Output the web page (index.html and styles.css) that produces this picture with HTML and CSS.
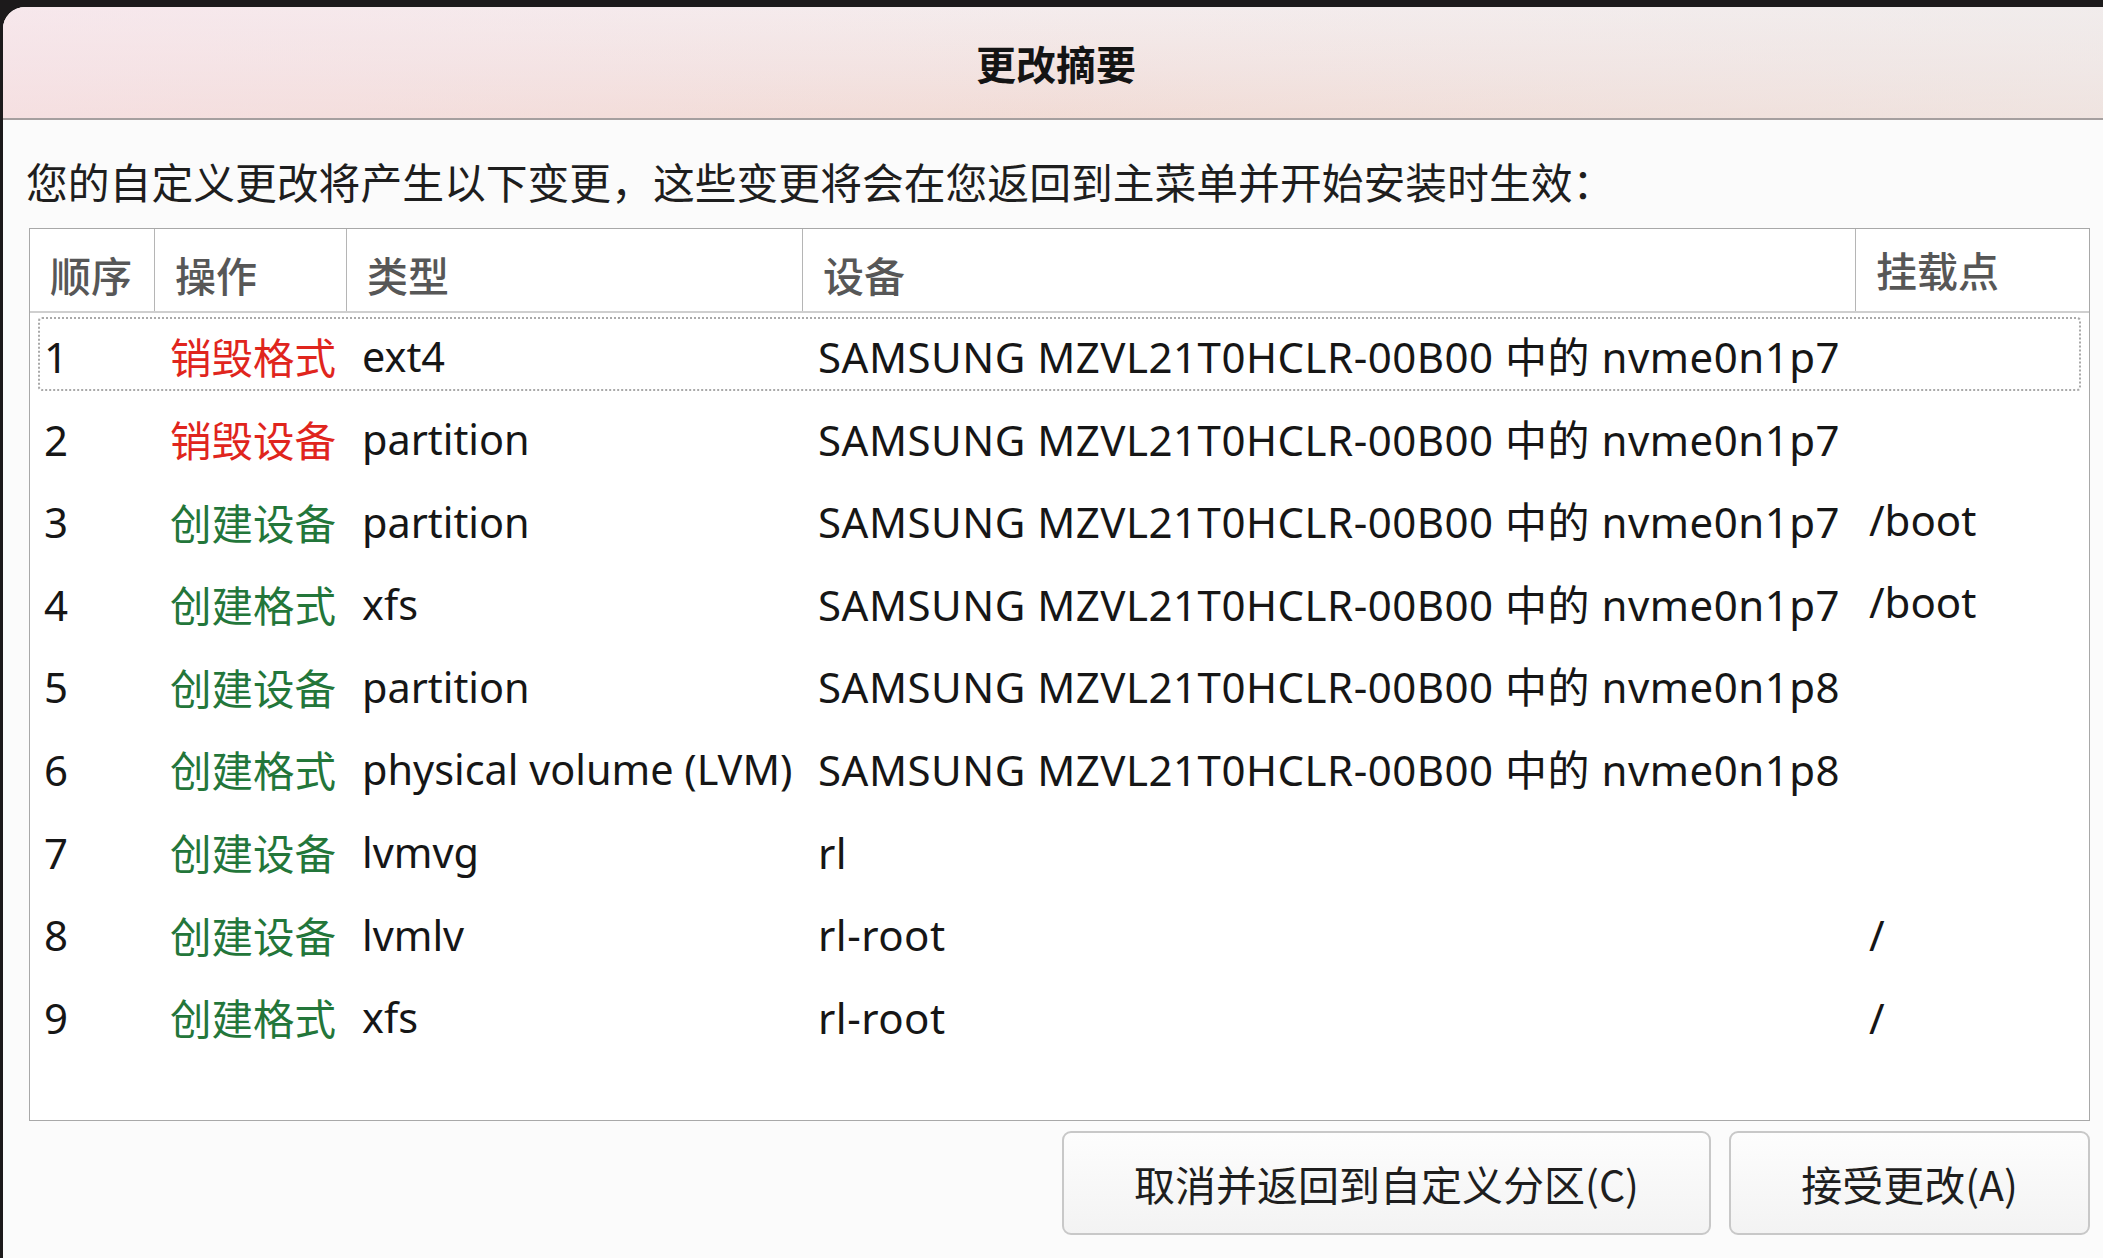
FILE: index.html
```html
<!DOCTYPE html>
<html lang="zh-CN">
<head>
<meta charset="utf-8">
<title>更改摘要</title>
<link rel="stylesheet" href="styles.css">
</head>
<body>
<div class="dialog">
  <div class="titlebar"><span class="title">更改摘要</span></div>
  <div class="content">
    <p class="intro">您的自定义更改将产生以下变更，这些变更将会在您返回到主菜单并开始安装时生效：</p>
    <div class="table">
      <div class="row head">
        <div class="c c1">顺序</div>
        <div class="c c2">操作</div>
        <div class="c c3">类型</div>
        <div class="c c4">设备</div>
        <div class="c c5">挂载点</div>
      </div>
      <div class="row focus">
        <div class="c c1">1</div>
        <div class="c c2 red">销毁格式</div>
        <div class="c c3">ext4</div>
        <div class="c c4">SAMSUNG MZVL21T0HCLR-00B00 中的 nvme0n1p7</div>
        <div class="c c5"></div>
      </div>
      <div class="row">
        <div class="c c1">2</div>
        <div class="c c2 red">销毁设备</div>
        <div class="c c3">partition</div>
        <div class="c c4">SAMSUNG MZVL21T0HCLR-00B00 中的 nvme0n1p7</div>
        <div class="c c5"></div>
      </div>
      <div class="row">
        <div class="c c1">3</div>
        <div class="c c2 green">创建设备</div>
        <div class="c c3">partition</div>
        <div class="c c4">SAMSUNG MZVL21T0HCLR-00B00 中的 nvme0n1p7</div>
        <div class="c c5 up">/boot</div>
      </div>
      <div class="row">
        <div class="c c1">4</div>
        <div class="c c2 green">创建格式</div>
        <div class="c c3">xfs</div>
        <div class="c c4">SAMSUNG MZVL21T0HCLR-00B00 中的 nvme0n1p7</div>
        <div class="c c5 up">/boot</div>
      </div>
      <div class="row">
        <div class="c c1">5</div>
        <div class="c c2 green">创建设备</div>
        <div class="c c3">partition</div>
        <div class="c c4">SAMSUNG MZVL21T0HCLR-00B00 中的 nvme0n1p8</div>
        <div class="c c5"></div>
      </div>
      <div class="row">
        <div class="c c1">6</div>
        <div class="c c2 green">创建格式</div>
        <div class="c c3">physical volume (LVM)</div>
        <div class="c c4">SAMSUNG MZVL21T0HCLR-00B00 中的 nvme0n1p8</div>
        <div class="c c5"></div>
      </div>
      <div class="row">
        <div class="c c1">7</div>
        <div class="c c2 green">创建设备</div>
        <div class="c c3">lvmvg</div>
        <div class="c c4">rl</div>
        <div class="c c5"></div>
      </div>
      <div class="row">
        <div class="c c1">8</div>
        <div class="c c2 green">创建设备</div>
        <div class="c c3">lvmlv</div>
        <div class="c c4">rl-root</div>
        <div class="c c5">/</div>
      </div>
      <div class="row">
        <div class="c c1">9</div>
        <div class="c c2 green">创建格式</div>
        <div class="c c3">xfs</div>
        <div class="c c4">rl-root</div>
        <div class="c c5">/</div>
      </div>
    </div>
    <div class="buttons">
      <button class="btn btn-cancel">取消并返回到自定义分区(C)</button>
      <button class="btn btn-accept">接受更改(A)</button>
    </div>
  </div>
</div>
</body>
</html>
```

FILE: styles.css
```css
html, body {
  margin: 0;
  padding: 0;
  height: 100%;
}
body {
  background: #1c1a1b;
  font-family: "Noto Sans", "Noto Sans CJK SC", sans-serif;
  color: #161616;
  overflow: hidden;
}
.dialog {
  margin: 7px 0 0 3px;
  height: 1251px;
  background: #fbfbfb;
  border-top-left-radius: 22px;
  overflow: hidden;
  display: flex;
  flex-direction: column;
}
.titlebar {
  height: 111px;
  flex: none;
  display: flex;
  align-items: center;
  justify-content: center;
  background:
    linear-gradient(to right, rgba(248,228,234,0.6), rgba(245,235,228,0.15) 50%, rgba(238,236,234,0.55)),
    linear-gradient(to bottom, #f4ecee 0%, #f2e2e1 55%, #f1d9d3 100%);
  border-bottom: 2px solid #a59f9f;
}
.title {
  font-family: "Noto Sans CJK SC", sans-serif;
  font-weight: bold;
  font-size: 40px;
  color: #141414;
  margin-left: 6px;
}
.content {
  padding: 0 13px 0 26px;
  display: flex;
  flex-direction: column;
}
.intro {
  margin: 33px 0 0 -3px;
  font-family: "Noto Sans CJK SC", sans-serif;
  font-size: 41.8px;
  line-height: 56px;
  height: 56px;
  color: #1e1e1e;
}
.table {
  margin-top: 19px;
  height: 891px;
  border: 1px solid #a8a8a8;
  background: #fff;
  display: flex;
  flex-direction: column;
}
.row {
  display: grid;
  grid-template-columns: 125px 192px 456px 1053px 1fr;
  height: 82.6px;
  align-items: center;
  font-size: 42px;
  position: relative;
}
.row .c {
  white-space: nowrap;
  padding-left: 15px;
  line-height: 1.2;
}
.row .c3 { font-size: 41.4px; }
.row .c4 { letter-spacing: 0.5px; }
.row .up { margin-top: -5px; }
.row.head {
  height: 82px;
  align-items: stretch;
  border-bottom: 2px solid #cfcfcf;
  margin-bottom: 3px;
  color: #575757;
}
.row.head .c {
  display: flex;
  align-items: center;
  padding-top: 10px;
  padding-left: 20px;
  border-right: 1px solid #b5b5b5;
  font-family: "Noto Sans CJK SC", sans-serif;
  font-weight: 500;
  font-size: 41px;
  letter-spacing: 0;
}
.row.head .c5 {
  border-right: none;
  padding-top: 0;
}
.row .c1 { padding-left: 14px; }
.row .c5 { padding-left: 13px; }
.row.head .c1 { padding-left: 20px; }
.row.head .c5 { padding-left: 20px; }
.c2 {
  font-family: "Noto Sans CJK SC", sans-serif;
  font-size: 41.5px;
}
.red { color: #e0251d; }
.green { color: #23763a; }
.row.focus::after {
  content: "";
  position: absolute;
  left: 8px;
  right: 8px;
  top: 1px;
  bottom: 8px;
  border: 2px dotted #a9a9a9;
  border-radius: 4px;
  pointer-events: none;
}
.buttons {
  margin-top: 10px;
  display: flex;
  justify-content: flex-end;
  gap: 18px;
}
.btn {
  height: 104px;
  border: 2px solid #c8c8c8;
  border-radius: 9px;
  background: linear-gradient(to bottom, #fdfdfd, #f3f3f3);
  font-family: "Noto Sans CJK SC", sans-serif;
  font-size: 41px;
  color: #1e1e1e;
  padding: 0;
}
.btn-cancel { width: 649px; }
.btn-accept { width: 361px; }
```
